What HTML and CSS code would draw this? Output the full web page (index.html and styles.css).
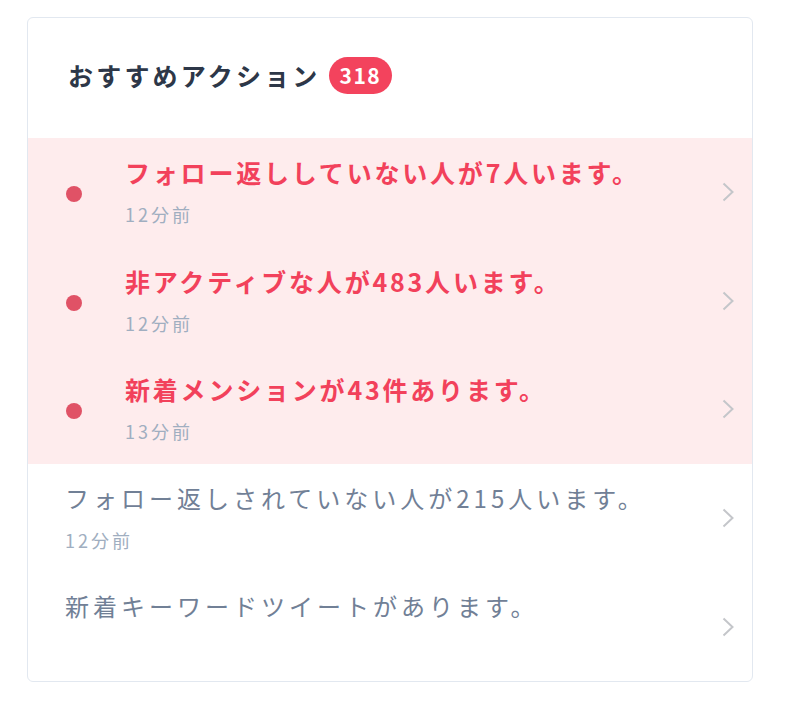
FILE: index.html
```html
<!DOCTYPE html>
<html lang="ja">
<head>
<meta charset="UTF-8" />
<meta name="viewport" content="width=device-width, initial-scale=1.0" />
<title>おすすめアクション</title>
<link rel="stylesheet" href="styles.css">
</head>
<body>

<div class="card">
  <div class="card-header">
    <h2>おすすめアクション</h2>
    <span class="badge">318</span>
  </div>

  <ul class="actions">
    <li class="action unread">
      <span class="dot"></span>
      <div class="action-body">
        <p class="action-title">フォロー返ししていない人が7人います。</p>
        <p class="action-time">12分前</p>
      </div>
      <svg class="chevron" width="12" height="20" viewBox="0 0 12 20"><polyline points="1.5,1.5 10.5,10 1.5,18.5" /></svg>
    </li>
    <li class="action unread">
      <span class="dot"></span>
      <div class="action-body">
        <p class="action-title">非アクティブな人が483人います。</p>
        <p class="action-time">12分前</p>
      </div>
      <svg class="chevron" width="12" height="20" viewBox="0 0 12 20"><polyline points="1.5,1.5 10.5,10 1.5,18.5" /></svg>
    </li>
    <li class="action unread">
      <span class="dot"></span>
      <div class="action-body">
        <p class="action-title">新着メンションが43件あります。</p>
        <p class="action-time">13分前</p>
      </div>
      <svg class="chevron" width="12" height="20" viewBox="0 0 12 20"><polyline points="1.5,1.5 10.5,10 1.5,18.5" /></svg>
    </li>
    <li class="action">
      <div class="action-body">
        <p class="action-title">フォロー返しされていない人が215人います。</p>
        <p class="action-time">12分前</p>
      </div>
      <svg class="chevron" width="12" height="20" viewBox="0 0 12 20"><polyline points="1.5,1.5 10.5,10 1.5,18.5" /></svg>
    </li>
    <li class="action">
      <div class="action-body">
        <p class="action-title">新着キーワードツイートがあります。</p>
      </div>
      <svg class="chevron" width="12" height="20" viewBox="0 0 12 20"><polyline points="1.5,1.5 10.5,10 1.5,18.5" /></svg>
    </li>
  </ul>
</div>

</body>
</html>
```

FILE: styles.css
```css
body {
  margin: 0;
  background: #fff;
  font-family: "Noto Sans CJK JP", "Noto Sans", sans-serif;
}

.card {
  width: 726px;
  box-sizing: border-box;
  margin: 17px 0 0 27px;
  border: 1px solid #e2e8f0;
  border-radius: 6px;
  overflow: hidden;
}

.card-header {
  display: flex;
  align-items: center;
  height: 120px;
  box-sizing: border-box;
  padding: 0 0 6px 40px;
}

.card-header h2 {
  margin: 0;
  font-size: 25px;
  font-weight: bold;
  letter-spacing: 3.2px;
  color: #2d3748;
}

.badge {
  margin-left: 8px;
  height: 37px;
  line-height: 37px;
  padding: 0 11px;
  border-radius: 19px;
  background: #f3435d;
  color: #fff;
  font-size: 21px;
  font-weight: bold;
  letter-spacing: 1.5px;
}

.actions {
  list-style: none;
  margin: 0;
  padding: 0;
}

.action {
  display: flex;
  align-items: center;
  min-height: 108.6px;
  box-sizing: border-box;
  padding: 0 18px 0 37px;
}

.action.unread {
  background: #feeced;
}

.dot {
  width: 16px;
  height: 16px;
  flex: none;
  margin: 4px 43px 0 1px;
  border-radius: 50%;
  background: #e05266;
}

.action-body {
  flex: 1;
  align-self: flex-start;
  padding-top: 18px;
}

.action-title {
  margin: 0;
  font-size: 24px;
  line-height: 32px;
  letter-spacing: 4px;
  color: #718096;
}

.unread .action-title {
  font-size: 25px;
  font-weight: bold;
  letter-spacing: 2.8px;
  color: #f2415b;
}

.action-time {
  margin: 14px 0 0;
  font-size: 18px;
  line-height: 24px;
  letter-spacing: 3px;
  color: #a0aec0;
}

.chevron {
  flex: none;
}

.chevron polyline {
  fill: none;
  stroke: #c4c6ca;
  stroke-width: 2;
}
```
